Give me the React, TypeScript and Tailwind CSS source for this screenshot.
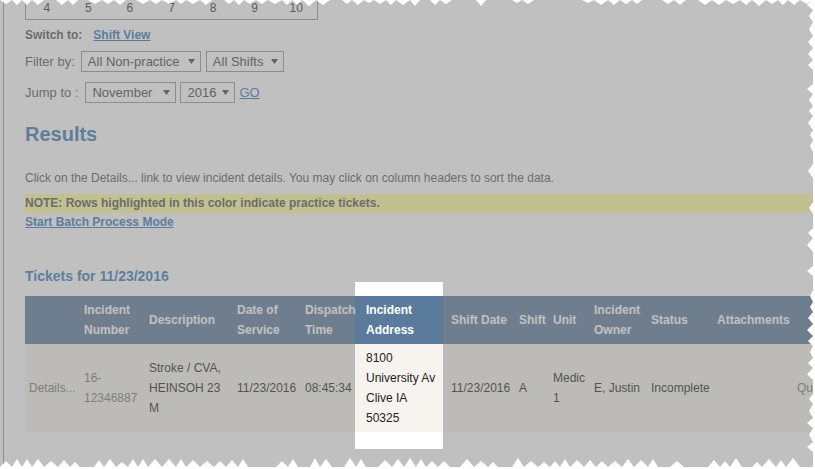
import React from "react";

const CAL = [4, 5, 6, 7, 8, 9, 10];

// small deterministic random so the torn edge is the same every render
function makeRand(seed: number) {
  let s = seed;
  return () => {
    s = (s * 9301 + 49297) % 233280;
    return s / 233280;
  };
}

function zigzag(len: number, seed: number, depth: number): [number, number][] {
  const r = makeRand(seed);
  const pts: [number, number][] = [];
  let p = 0;
  while (p < len) {
    const step = 5 + Math.floor(r() * 3);
    if (r() < 0.2) {
      pts.push([p, 0]);
      p += step * 2;
      pts.push([p, 0]);
      continue;
    }
    pts.push([p, 0]);
    p += step;
    pts.push([p, Math.round(depth * (0.55 + 0.45 * r()))]);
    p += step;
  }
  pts.push([p, 0]);
  return pts;
}

function TornEdges() {
  const top = zigzag(815, 7, 6).map(([x, d]) => `${x},${d}`).join(" ");
  const right = zigzag(469, 3, 6).map(([y, d]) => `${813 - d},${y}`).join(" ");
  const bottom = zigzag(815, 11, 9).map(([x, d]) => `${x},${467 - d}`).join(" ");
  return (
    <svg className="pointer-events-none absolute inset-0 z-20" width="815" height="469">
      <polygon points={`0,0 ${top} 815,0`} fill="#fff" />
      <polygon points={`815,0 ${right} 815,469`} fill="#fff" />
      <polygon points={`0,469 ${bottom} 815,469`} fill="#fff" />
    </svg>
  );
}

function Select({ label, width }: { label: string; width: string }) {
  return (
    <div
      className={`flex h-[21px] items-center justify-between border border-[#999] bg-white pl-[6px] pr-[5px] text-[13px] text-[#444] ${width}`}
    >
      <span>{label}</span>
      <svg width="7" height="5" viewBox="0 0 7 5">
        <polygon points="0,0 7,0 3.5,5" fill="#444" />
      </svg>
    </div>
  );
}

const th = "px-[4px] py-[4px] text-left align-middle font-bold leading-[20px]";
const td = "px-[4px] py-[4px] text-left align-middle leading-[20px]";

export default function App() {
  return (
    <div className="relative h-[469px] w-[815px] overflow-hidden bg-white font-['Liberation_Sans',Arial,sans-serif] text-[12px] text-[#333]">
      <div className="ml-[3px] h-full border-l border-[#999] pl-[21px]">
        {/* calendar week row, top is cut off */}
        <div className="-mt-[3px] grid w-[293px] grid-cols-7 border border-[#999]">
          {CAL.map((d) => (
            <div key={d} className="h-[21px] text-center leading-[21px] text-[#333]">
              {d}
            </div>
          ))}
        </div>

        <div className="mt-[5px] flex items-center leading-[20px]">
          <span className="font-bold text-[#555]">Switch to:</span>
          <a className="ml-[11px] font-bold text-[#3777b8] underline">Shift View</a>
        </div>

        <div className="mt-[6px] flex items-center gap-[5px] text-[13px] text-[#555]">
          <span className="mr-[1px]">Filter by:</span>
          <Select label="All Non-practice" width="w-[120px]" />
          <Select label="All Shifts" width="w-[78px]" />
        </div>

        <div className="mt-[10px] flex items-center gap-[4px] text-[13px] text-[#555]">
          <span className="mr-[3px]">Jump to :</span>
          <Select label="November" width="w-[91px]" />
          <Select label="2016" width="w-[55px]" />
          <a className="text-[#3777b8] underline">GO</a>
        </div>

        <h2 className="mt-[19px] text-[20px] font-bold leading-[24px] text-[#3a7ab5]">Results</h2>

        <p className="mt-[24px] leading-[16px] text-[#555]">
          Click on the Details... link to view incident details. You may click on column headers to sort the data.
        </p>

        <div className="mt-[8px] h-[19px] bg-[#ffff9e] font-bold leading-[19px] text-[#555]">
          NOTE: Rows highlighted in this color indicate practice tickets.
        </div>

        <a className="block font-bold leading-[18px] text-[#3777b8] underline">Start Batch Process Mode</a>

        <h3 className="mt-[36px] text-[14px] font-bold leading-[18px] text-[#3a7ab5]">Tickets for 11/23/2016</h3>

        <table className="mt-[11px] w-[880px] table-fixed border-collapse">
          <colgroup>
            <col className="w-[55px]" />
            <col className="w-[65px]" />
            <col className="w-[88px]" />
            <col className="w-[68px]" />
            <col className="w-[61px]" />
            <col className="w-[85px]" />
            <col className="w-[68px]" />
            <col className="w-[34px]" />
            <col className="w-[41px]" />
            <col className="w-[57px]" />
            <col className="w-[66px]" />
            <col className="w-[80px]" />
            <col className="w-[112px]" />
          </colgroup>
          <thead>
            <tr className="bg-[#5b7b9c] text-white">
              <th className={th}></th>
              <th className={th}>Incident Number</th>
              <th className={th}>Description</th>
              <th className={th}>Date of Service</th>
              <th className={th}>Dispatch Time</th>
              <th className={th}>Incident Address</th>
              <th className={th}>Shift Date</th>
              <th className={th}>Shift</th>
              <th className={th}>Unit</th>
              <th className={th}>Incident Owner</th>
              <th className={th}>Status</th>
              <th className={th}>Attachments</th>
              <th className={th}></th>
            </tr>
          </thead>
          <tbody>
            <tr className="bg-[#f7f4ef] text-[#222]">
              <td className={`${td} text-[#777]`}>Details...</td>
              <td className={`${td} text-[#777]`}>16-12346887</td>
              <td className={td}>Stroke / CVA, HEINSOH 23 M</td>
              <td className={`${td} whitespace-nowrap`}>11/23/2016</td>
              <td className={td}>08:45:34</td>
              <td className={td}>8100 University Av Clive IA 50325</td>
              <td className={`${td} whitespace-nowrap`}>11/23/2016</td>
              <td className={td}>A</td>
              <td className={td}>Medic 1</td>
              <td className={td}>E, Justin</td>
              <td className={td}>Incomplete</td>
              <td className={td}></td>
              <td className={`${td} text-[#777]`}>Quick View</td>
            </tr>
          </tbody>
        </table>
      </div>

      {/* spotlight on the address column, the rest of the page is dimmed */}
      <div className="absolute left-[355px] top-[282px] z-10 h-[167px] w-[88px] shadow-[0_0_0_1200px_rgba(129,129,129,0.5)]" />

      <TornEdges />
    </div>
  );
}
